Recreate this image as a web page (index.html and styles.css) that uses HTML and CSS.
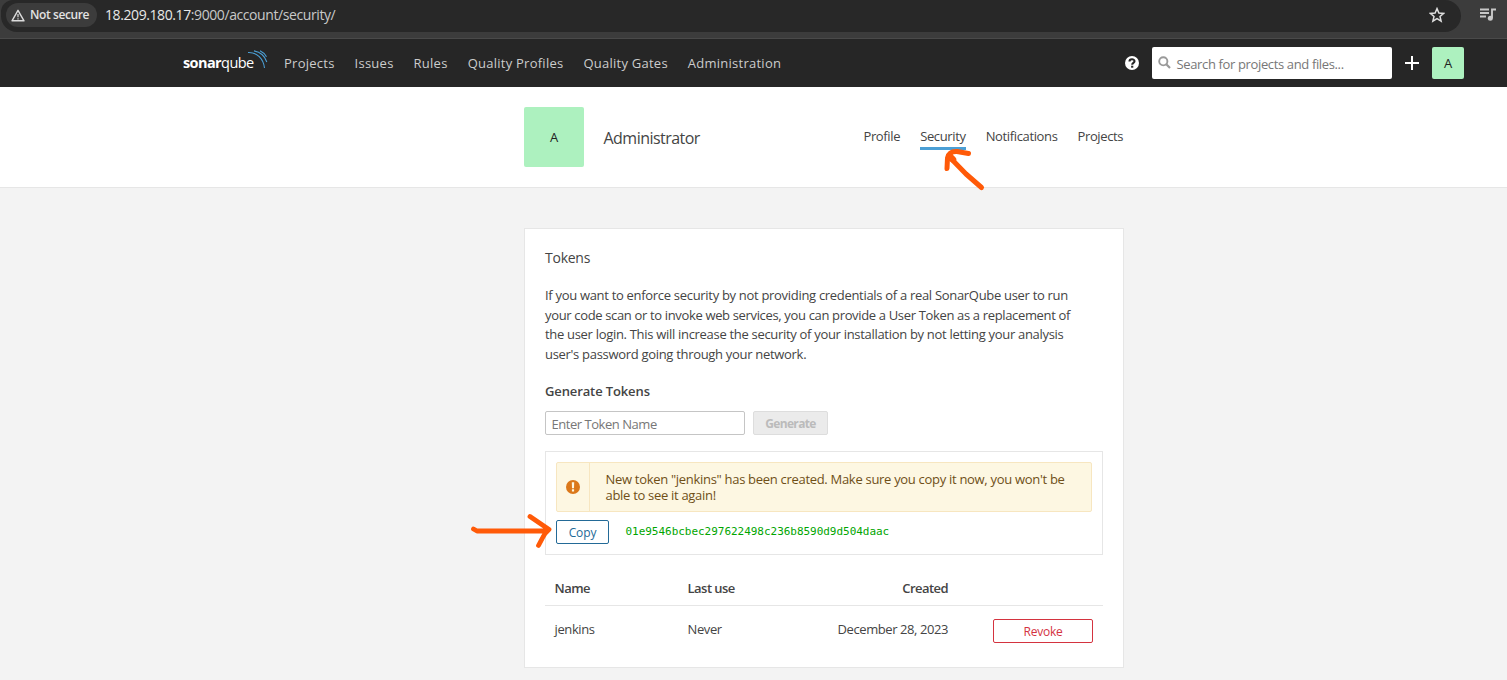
FILE: index.html
```
<!DOCTYPE html>
<html lang="en">
<head>
<meta charset="utf-8">
<title>Security - SonarQube</title>
<link rel="stylesheet" href="styles.css">
</head>
<body>
<div class="browser-bar">
  <div class="omnibox">
    <div class="chip">
      <svg width="14" height="13" viewBox="0 0 14 13"><path d="M7 1.3 13 11.8H1Z" fill="none" stroke="#dcdcdc" stroke-width="1.4" stroke-linejoin="round"/><path d="M7 5v3.2M7 9.2v1.2" stroke="#dcdcdc" stroke-width="1.2"/></svg>
      <span class="chip-text">Not secure</span>
    </div>
    <div class="url">18.209.180.17<span class="path">:9000/account/security/</span></div>
    <svg class="star" width="16" height="16" viewBox="0 0 16 16"><path d="M8 1.6 9.9 6l4.7.4-3.6 3.1 1.1 4.6L8 11.6l-4.1 2.5L5 9.500 1.400 6.400 6.100 6Z" fill="none" stroke="#dedede" stroke-width="1.5"/></svg>
  </div>
  <svg class="media" width="16" height="14" viewBox="0 0 16 14"><path d="M0 1.500h9M0 5h9M0 8.500h6M12 10V1.500h4" fill="none" stroke="#c8c8c8" stroke-width="1.900"/><circle cx="10.300" cy="10.300" r="2.500" fill="#c8c8c8"/></svg>
</div>
<header class="topnav">
  <div class="logo"><b>sonar</b><span>qube</span>
    <svg width="20" height="19" viewBox="0 0 20 19"><path d="M0 2.500C9 2 15.500 9 16.500 18M6 .9C12 2 17 6.500 18.800 12M12 .8c3 1.400 5 3.200 6.500 6" fill="none" stroke="#4b9fd5" stroke-width="1.100"/></svg>
  </div>
  <nav class="menu"><a>Projects</a><a>Issues</a><a>Rules</a><a>Quality Profiles</a><a>Quality Gates</a><a>Administration</a></nav>
  <div class="tools">
    <svg width="14" height="14" viewBox="0 0 14 14"><circle cx="7" cy="7" r="7" fill="#fff"/><path d="M4.500 5.400C4.500 2.600 9.500 2.600 9.500 5.200 9.500 6.900 7.200 6.700 7.200 8.700" fill="none" stroke="#262626" stroke-width="2.100"/><path d="M6.100 9.700h2.200v2H6.100z" fill="#262626"/></svg>
    <div class="search"><svg width="13" height="13" viewBox="0 0 13 13"><circle cx="5.300" cy="5.300" r="4.100" fill="none" stroke="#999" stroke-width="1.900"/><path d="m8.300 8.300 3.700 3.700" stroke="#999" stroke-width="2.200"/></svg><span>Search for projects and files...</span></div>
    <svg class="plus" width="14" height="14" viewBox="0 0 14 14"><path d="M7 0v14M0 7h14" stroke="#fff" stroke-width="2"/></svg>
    <div class="avatar small">A</div>
  </div>
</header>
<section class="account">
  <div class="account-inner">
    <div class="avatar large">A</div>
    <h1 class="user">Administrator</h1>
    <nav class="tabs"><a>Profile</a><a class="active">Security</a><a>Notifications</a><a>Projects</a></nav>
  </div>
</section>
<main class="card">
  <h2 class="title">Tokens</h2>
  <p class="desc">If you want to enforce security by not providing credentials of a real SonarQube user to run<br><span class="tight">your code scan or to invoke web services, you can provide a User Token as a replacement of</span><br>the user login. This will increase the security of your installation by not letting your analysis<br>user's password going through your network.</p>
  <h3 class="subtitle">Generate Tokens</h3>
  <div class="form"><div class="input"><span>Enter Token Name</span></div><div class="button disabled">Generate</div></div>
  <div class="panel">
    <div class="alert">
      <div class="alert-icon"><svg width="14" height="14" viewBox="0 0 14 14"><circle cx="7" cy="7" r="7" fill="#db781a"/><path d="M5.800 2.300h2.400L8 8.300H6zM5.900 9.300h2.200v2.200H5.900z" fill="#fdf7e2"/></svg></div>
      <div class="alert-text">New token "jenkins" has been created. Make sure you copy it now, you won't be<br>able to see it again!</div>
    </div>
    <div class="token-row"><div class="button copy">Copy</div><code class="token">01e9546bcbec297622498c236b8590d9d504daac</code></div>
  </div>
  <div class="grid head"><span>Name</span><span>Last use</span><span class="right">Created</span></div>
  <div class="grid row"><span>jenkins</span><span>Never</span><span class="right">December 28, 2023</span><div class="button revoke">Revoke</div></div>
</main>
<svg class="marks" width="1507" height="680" viewBox="0 0 1507 680" fill="none" stroke="#ff5a08" stroke-linecap="round" stroke-linejoin="round"><path d="M981.500 187.500 966 174 949 156.500M947 168.500 947.500 158Q949 151 957 151.500L968.500 153.500" stroke-width="5"/><path d="M949.500 156 953 159.500" stroke-width="6.500"/><path d="M473.500 529 477 531H547M530 516.500 549 529.500Q545 533 543 537L538.500 545.500" stroke-width="4.800"/></svg>
</body>
</html>
```
FILE: styles.css
```
* { box-sizing: border-box; }
body { margin: 0; width: 1507px; height: 680px; overflow: hidden; background: #f3f3f3; color: #444; font: 13px/20px "Open Sans", "Noto Sans", sans-serif; }
svg { display: block; flex: none; }
span, a, .desc, .alert-text { white-space: nowrap; }
h1, h2, h3, p { margin: 0; font-weight: 400; }
.browser-bar { height: 39px; background: #3c3c3c; border-bottom: 1px solid #4a4a4a; display: flex; align-items: flex-start; }
.omnibox { width: 1460px; height: 32px; margin-left: 1px; padding: 0 16px 2px 5px; background: #282828; border-radius: 12px 16px 16px 16px; display: flex; align-items: center; color: #e3e3e3; }
.chip { width: 91px; height: 24px; border-radius: 12px; background: #3c3c3c; display: flex; align-items: center; gap: 5px; padding-left: 5px; }
.chip-text { font-size: 12px; font-weight: 600; letter-spacing: -.4px; }
.url { margin-left: 8px; font-size: 14px; letter-spacing: -.41px; color: #e8e8e8; }
.path { color: #c8c8c8; }
.star { margin-left: auto; }
.media { margin: 8px 0 0 18.5px; }
.topnav { height: 48px; background: #262626; display: flex; align-items: center; padding: 0 43px 0 183px; color: #fff; }
.logo { width: 101px; display: flex; align-items: center; font-size: 14.5px; line-height: 20px; letter-spacing: -.6px; }
.logo b { font-weight: 700; }
.logo span { letter-spacing: -.55px; }
.logo svg { margin: -8px 0 0 -6px; }
.menu { display: flex; gap: 20px; color: #ccc; letter-spacing: .25px; }
.tools { margin-left: auto; display: flex; align-items: center; }
.search { width: 240px; height: 32px; margin: 0 13px; background: #fff; border-radius: 2px; color: #777; display: flex; align-items: center; gap: 5.5px; padding: 1px 0 0 6px; letter-spacing: -.36px; }
.search svg { margin-top: -2px; }
.plus { margin-right: 13px; }
.avatar { background: #adf1bf; color: #222; border-radius: 2px; display: flex; align-items: center; justify-content: center; }
.small { width: 32px; height: 32px; }
.large { width: 60px; height: 60px; }
.account { height: 101px; background: #fff; border-bottom: 1px solid #e6e6e6; padding-top: 20px; }
.account-inner { width: 600px; margin-left: 524px; display: flex; align-items: center; }
.user { margin: 1px 0 0 19.5px; font-size: 16px; letter-spacing: -.53px; }
.tabs { margin: 0 .8px 0 auto; display: flex; gap: 20px; letter-spacing: -.36px; }
.tabs a { height: 26px; border-bottom: 3px solid transparent; line-height: 24px; }
.tabs .active { border-color: #4b9fd5; }
.card { width: 600px; height: 440px; margin: 40px 0 0 524px; background: #fff; border: 1px solid #e6e6e6; padding: 19px 20px; }
.title { font-size: 14px; line-height: 20px; letter-spacing: -.25px; }
.desc { margin-top: 18px; line-height: 19.5px; letter-spacing: -.305px; }
.tight { letter-spacing: -.345px; }
.subtitle { margin-top: 17px; font-size: 13px; font-weight: 600; letter-spacing: -.12px; }
.form { margin-top: 10px; display: flex; gap: 8px; }
.input { width: 200px; height: 24px; border: 1px solid #c5c5c5; border-radius: 2px; padding: 2px 5.5px; color: #777; letter-spacing: -.46px; }
.button { height: 24px; border: 1px solid; border-radius: 2px; font-size: 12px; line-height: 23px; text-align: center; }
.disabled { width: 75px; background: #ebebeb; border-color: #ddd; color: #bbb; font-weight: 700; letter-spacing: -.65px; }
.panel { margin-top: 16px; width: 558px; height: 104px; border: 1px solid #e6e6e6; padding: 10px; }
.alert { height: 50px; background: #fdf7e2; border: 1px solid #f7e6c0; border-radius: 2px; color: #6f4f17; display: flex; line-height: 16px; }
.alert-icon { width: 33px; border-right: 1px solid #f7e6c0; display: flex; align-items: center; justify-content: center; }
.alert-text { padding: 8px 0 0 15.5px; letter-spacing: -.3px; }
.token-row { margin-top: 8px; display: flex; gap: 16.5px; }
.copy { width: 53px; color: #236a97; font-weight: 500; letter-spacing: -.1px; }
.token { color: #00a500; font: 11px/23px "DejaVu Sans Mono", monospace; letter-spacing: -.03px; }
.grid { display: grid; grid-template-columns: 133px 117px 144px 100px; width: 558px; padding-left: 9.6px; }
.head { height: 51px; padding-top: 23px; border-bottom: 1px solid #e6e6e6; font-weight: 600; letter-spacing: -.55px; }
.row { padding-top: 13px; line-height: 20px; letter-spacing: -.42px; }
.right { text-align: right; padding-right: .6px; }
.revoke { color: #d4333f; margin-left: 44.4px; width: 100px; font-weight: 500; letter-spacing: -.25px; }
.marks { position: absolute; left: 0; top: 0; pointer-events: none; }
```
